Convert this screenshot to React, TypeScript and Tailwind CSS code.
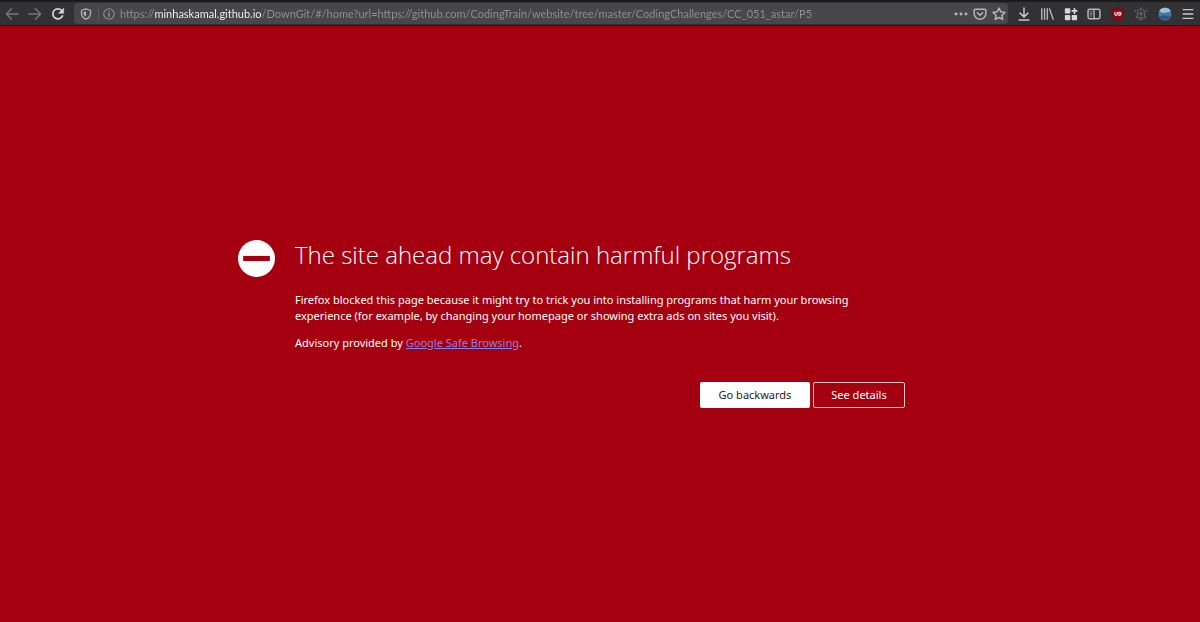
import type { ReactNode } from 'react';

const URL_TEXT =
  'https://minhaskamal.github.io/DownGit/#/home?url=https://github.com/CodingTrain/website/tree/master/CodingChallenges/CC_051_astar/P5';

type IconProps = { children: ReactNode; className?: string };

function Icon({ children, className = 'size-3.5' }: IconProps) {
  return (
    <svg
      viewBox="0 0 16 16"
      className={className}
      fill="none"
      stroke="currentColor"
      strokeWidth="1.7"
      strokeLinecap="round"
      strokeLinejoin="round"
      aria-hidden="true"
    >
      {children}
    </svg>
  );
}

const NAV = [
  {
    label: 'Back',
    color: 'text-[#77777a]',
    icon: <Icon><path d="M15 8H1.5M7.5 2 1.5 8l6 6" /></Icon>
  },
  {
    label: 'Forward',
    color: 'text-[#77777a]',
    icon: <Icon><path d="M1 8h13.5M8.5 2l6 6-6 6" /></Icon>
  },
  {
    label: 'Reload',
    color: 'text-[#d6d6d8]',
    icon: (
      <Icon>
        <path d="M13.2 10.2A5.8 5.8 0 1 1 12.3 4" strokeWidth="2" />
        <path d="M14.5 1.5v5.7H8.8z" fill="currentColor" strokeWidth="0.6" />
      </Icon>
    )
  }
];

const PAGE_ACTIONS = [
  {
    label: 'Page actions',
    icon: (
      <Icon>
        <g fill="currentColor" stroke="none">
          <circle cx="2.3" cy="8" r="1.7" />
          <circle cx="8" cy="8" r="1.7" />
          <circle cx="13.7" cy="8" r="1.7" />
        </g>
      </Icon>
    )
  },
  {
    label: 'Save to Pocket',
    icon: (
      <Icon>
        <path d="M2.5 2.5h11a1.2 1.2 0 0 1 1.2 1.2v3.6a6.7 6.7 0 0 1-13.4 0V3.7a1.2 1.2 0 0 1 1.2-1.2z" />
        <path d="m5 6.5 3 2.9 3-2.9" />
      </Icon>
    )
  },
  {
    label: 'Bookmark this page',
    icon: <Icon><path d="m8 1.2 2.1 4.3 4.7.7-3.4 3.3.8 4.7L8 12l-4.2 2.2.8-4.7L1.2 6.2l4.7-.7z" /></Icon>
  }
];

const TOOLS = [
  {
    label: 'Downloads',
    color: 'text-[#c8c8ca]',
    icon: <Icon><path d="M8 1v10M3.5 7 8 11.3 12.5 7M2.5 14.8h11" /></Icon>
  },
  {
    label: 'Library',
    color: 'text-[#b4b4b6]',
    icon: <Icon><path d="M2 2v12M5.2 2v12M8.4 2v12M11 2.3 15 14" strokeWidth="1.6" /></Icon>
  },
  {
    label: 'Add-ons',
    color: 'text-[#d8d8da]',
    icon: (
      <Icon>
        <g fill="currentColor" stroke="none">
          <rect x="1" y="1.5" width="6.2" height="6" rx="1" />
          <rect x="1" y="9" width="6.2" height="6" rx="1" />
          <rect x="8.8" y="9" width="6.2" height="6" rx="1" />
        </g>
        <path d="M12 2v5M9.5 4.5h5" strokeWidth="2" />
      </Icon>
    )
  },
  {
    label: 'Sidebars',
    color: 'text-[#b8b8ba]',
    icon: (
      <Icon>
        <rect x="1.2" y="2.5" width="13.6" height="11" rx="2" />
        <path d="M8 3v10" strokeWidth="1.5" />
        <path d="M3.8 5.5h2M3.8 8h2M3.8 10.3h1" strokeWidth="1" />
      </Icon>
    )
  },
  {
    label: 'uBlock',
    color: 'text-white',
    icon: (
      <Icon>
        <path d="M8 .8c2 1.4 4.2 1.7 6.6 1.9v5.200c0 3.700-2.800 5.800-6.600 7.500-3.800-1.700-6.600-3.800-6.600-7.500V2.700C3.800 2.500 6 2.200 8 .8z" fill="#910713" stroke="#80000d" strokeWidth="0.8" />
        <path d="M4.500 6v2.200a1.300 1.300 0 0 0 2.600 0V6M9 6v3.500h.7a1.750 1.750 0 0 0 0-3.500z" strokeWidth="1.2" />
      </Icon>
    )
  },
  {
    label: 'Notifications',
    color: 'text-[#5e5e60]',
    icon: (
      <Icon>
        <path d="M2.5 12.2h11L12 9.8V6.5a4 4 0 0 0-8 0v3.300zM8 1v1.500M6.500 14.300h3M2.300 3.500 1 5M13.700 3.500 15 5" strokeWidth="1.5" />
        <path d="M8 5.500v4.500M6 7.700h4" strokeWidth="1.800" />
      </Icon>
    )
  },
  {
    label: 'Globe',
    color: 'text-white',
    icon: (
      <Icon>
        <circle cx="8" cy="8" r="7.5" fill="#407aa8" stroke="none" />
        <path d="M1.500 4.500a7.500 7.500 0 0 1 13 0C11 7 9 5.500 7 6.500 5 7.500 3.500 6 1.500 4.500z" fill="#a4bfd2" stroke="none" />
        <path d="M1 10c3 1 4-1 6.500-.5s4 1.500 7.500.3A7.500 7.500 0 0 1 1 10z" fill="#2d5a84" stroke="none" />
      </Icon>
    )
  },
  {
    label: 'Menu',
    color: 'text-[#c8c8ca]',
    icon: <Icon><path d="M2.5 3h11M2.5 8h11M2.5 13h11" /></Icon>
  }
];

function Toolbar() {
  return (
    <header className="flex h-[26px] items-center border-t-2 border-b border-t-[#1b1b1d] border-b-[#2a1518] bg-[#323234]">
      <nav className="flex w-[70px] shrink-0" aria-label="History">
        {NAV.map((item) => (
          <button key={item.label} aria-label={item.label} className={`flex flex-1 justify-center ${item.color}`}>
            {item.icon}
          </button>
        ))}
      </nav>

      <div className="ml-1 flex h-[21px] min-w-0 flex-1 items-center rounded-sm bg-[#474749] text-[#b5b5b7]">
        <button aria-label="Tracking protection" className="flex w-6 justify-center">
          <Icon className="size-3">
            <path d="M8 1.2 14 3v4.5c0 3.5-2.5 5.800-6 7.300-3.500-1.500-6-3.800-6-7.300V3z" />
            <path d="M8 4.300v7.200c-2-1-3.200-2.200-3.200-4.200V5.200z" fill="currentColor" stroke="none" />
          </Icon>
        </button>
        <span className="h-3.5 w-px bg-[#5a5a5c]" />
        <button aria-label="Site information" className="flex w-[19px] justify-center text-[#929294]">
          <Icon className="size-3">
            <circle cx="8" cy="8" r="7" strokeWidth="1.5" />
            <path d="M8 7.300v4M8 4.500v.1" strokeWidth="2" />
          </Icon>
        </button>
        <input
          aria-label="Address"
          defaultValue={URL_TEXT}
          spellCheck={false}
          className="ml-0.5 h-5 min-w-0 flex-1 bg-[linear-gradient(90deg,#929294_35px,#f9f9fa_35px,#f9f9fa_142px,#929294_142px)] bg-clip-text font-['Lato','Open_Sans',sans-serif] text-[11px] text-transparent outline-none"
        />
        <div className="flex shrink-0">
          {PAGE_ACTIONS.map((item) => (
            <button key={item.label} aria-label={item.label} className="flex w-[19px] justify-center">
              {item.icon}
            </button>
          ))}
        </div>
      </div>

      <div className="ml-1 flex w-[188px] shrink-0">
        {TOOLS.map((item) => (
          <button key={item.label} aria-label={item.label} className={`flex flex-1 justify-center ${item.color}`}>
            {item.icon}
          </button>
        ))}
      </div>
    </header>
  );
}

export default function App() {
  return (
    <div className="flex min-h-screen flex-col bg-[#a4000f] font-['Noto_Sans','Open_Sans',sans-serif] text-white">
      <Toolbar />
      <main className="grid flex-1 grid-cols-[57px_minmax(0,610px)_57px] content-center justify-center pb-[3px]">
        <svg viewBox="0 0 36 36" className="mt-[3px] size-[37px]" aria-hidden="true">
          <circle cx="18" cy="18" r="18" fill="#fff" />
          <path d="M5 15.5h26v5H5z" fill="#a4000f" />
        </svg>
        <section>
          <h1 className="font-['Open_Sans','Noto_Sans',sans-serif] text-2xl leading-9 font-light">
            The site ahead may contain harmful programs
          </h1>
          <p className="mt-[19px] max-w-[570px] text-[11px] leading-4">
            Firefox blocked this page because it might try to trick you into installing programs that harm your browsing
            experience (for example, by changing your homepage or showing extra ads on sites you visit).
          </p>
          <p className="mt-[11px] text-[11px] leading-4">
            Advisory provided by{' '}
            <a href="#safe-browsing" className="text-[#8f7fe8] underline">Google Safe Browsing</a>.
          </p>
          <div className="mt-[31px] flex justify-end gap-[3px] text-[11px]">
            <button className="h-[26px] w-[110px] rounded-xs bg-white text-[#1c1c1e]">Go backwards</button>
            <button className="h-[26px] w-[92px] rounded-xs border border-[#f0c8cc]">See details</button>
          </div>
        </section>
      </main>
    </div>
  );
}
